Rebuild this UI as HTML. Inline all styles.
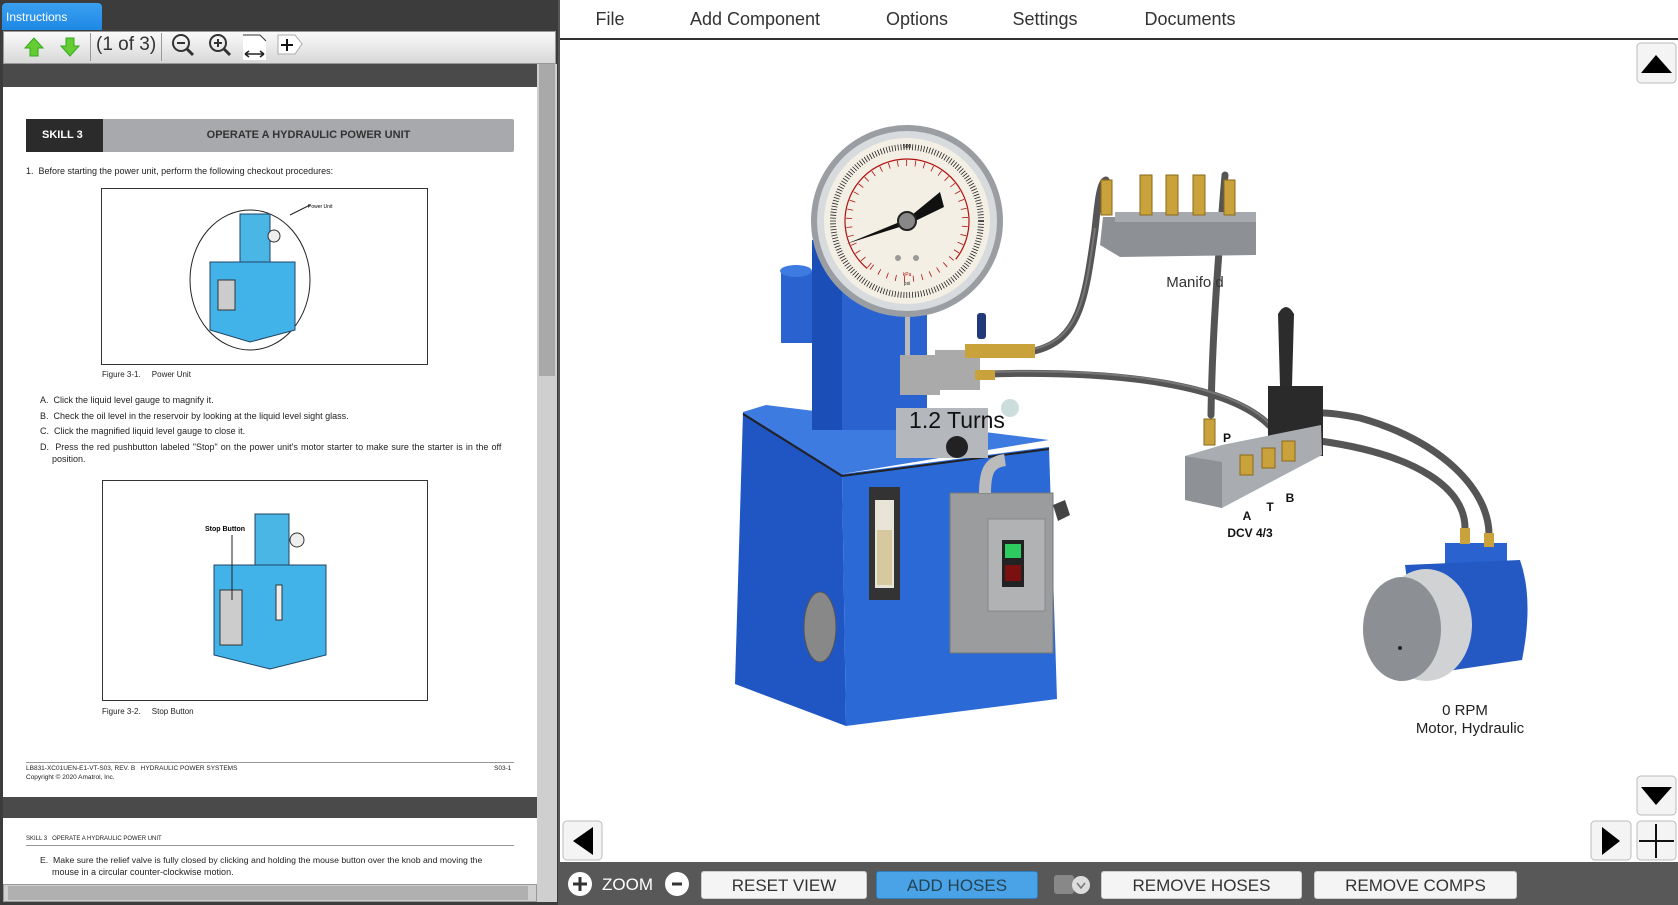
<!DOCTYPE html>
<html><head><meta charset="utf-8"><style>
*{margin:0;padding:0;box-sizing:border-box}
body{width:1678px;height:905px;position:relative;overflow:hidden;background:#fff;font-family:"Liberation Sans",sans-serif}
.a{position:absolute}
.menu span{position:absolute;top:9px;font-size:18px;color:#333;transform:translateX(-50%);white-space:nowrap}
.btn{position:absolute;top:871px;height:28px;background:#f4f4f4;border:1px solid #ccc;border-radius:3px;font-size:17px;color:#333;text-align:center;line-height:27px}
.pt{position:absolute;font-size:9px;color:#222;white-space:nowrap}
</style></head><body>
<div class="a" style="left:0;top:0;width:558px;height:905px;background:#3c3c3c"></div>
<div class="a" style="left:2px;top:3px;width:100px;height:27px;background:linear-gradient(#3aa0f0,#1e88e5);border-radius:4px 4px 0 0;color:#fff;font-size:12px;padding:7px 0 0 4px">Instructions</div>
<div class="a" style="left:3px;top:31px;width:553px;height:33px;background:linear-gradient(#fafafa,#d8d8d8);border:1px solid #999"></div>
<div class="a" style="left:96px;top:34px;font-size:19px;color:#333">(1 of 3)</div>
<div class="a" style="left:90px;top:33px;width:1px;height:28px;background:#999"></div>
<div class="a" style="left:161px;top:33px;width:1px;height:28px;background:#999"></div>
<div class="a" style="left:3px;top:64px;width:534px;height:23px;background:#4a4a4a"></div>
<div class="a" style="left:537px;top:64px;width:20px;height:838px;background:#cfcfcf"></div>
<div class="a" style="left:539px;top:64px;width:16px;height:312px;background:#a9a9a9"></div>
<div class="a" style="left:3px;top:87px;width:534px;height:710px;background:#fff"></div>
<div class="a" style="left:3px;top:797px;width:534px;height:21px;background:#4a4a4a"></div>
<div class="a" style="left:3px;top:818px;width:534px;height:66px;background:#fff"></div>
<div class="a" style="left:3px;top:884px;width:534px;height:18px;background:#cfcfcf;border:1px solid #999"></div>
<div class="a" style="left:8px;top:886px;width:520px;height:14px;background:#b0b0b0"></div>
<div class="a" style="left:26px;top:119px;width:488px;height:33px;background:#a7a9ac;border-radius:2px"></div>
<div class="a" style="left:26px;top:119px;width:77px;height:33px;background:#2b2b2b;color:#fff;font-size:11px;font-weight:bold;line-height:33px;padding-left:16px">SKILL 3</div>
<div class="a" style="left:103px;top:119px;width:411px;height:33px;color:#333;font-size:11px;font-weight:bold;line-height:33px;text-align:center">OPERATE A HYDRAULIC POWER UNIT</div>
<div class="pt" style="left:26px;top:166px">1.&nbsp;&nbsp;Before starting the power unit, perform the following checkout procedures:</div>
<div class="a" style="left:101px;top:188px;width:327px;height:177px;border:1px solid #333"></div>
<div class="pt" style="left:102px;top:370px;font-size:8px">Figure 3-1.&nbsp;&nbsp;&nbsp;&nbsp;&nbsp;Power Unit</div>
<div class="pt" style="left:40px;top:395px">A.&nbsp;&nbsp;Click the liquid level gauge to magnify it.</div>
<div class="pt" style="left:40px;top:411px">B.&nbsp;&nbsp;Check the oil level in the reservoir by looking at the liquid level sight glass.</div>
<div class="pt" style="left:40px;top:426px">C.&nbsp;&nbsp;Click the magnified liquid level gauge to close it.</div>
<div class="pt" style="left:40px;top:442px;word-spacing:0.6px">D.&nbsp;&nbsp;Press the red pushbutton labeled "Stop" on the power unit's motor starter to make sure the starter is in the off</div>
<div class="pt" style="left:52px;top:454px">position.</div>
<div class="a" style="left:102px;top:480px;width:326px;height:221px;border:1px solid #333"></div>
<div class="pt" style="left:102px;top:707px;font-size:8px">Figure 3-2.&nbsp;&nbsp;&nbsp;&nbsp;&nbsp;Stop Button</div>
<div class="a" style="left:26px;top:762px;width:488px;height:1px;background:#999"></div>
<div class="pt" style="left:26px;top:765px;font-size:6.5px">LB831-XC01UEN-E1-VT-S03, REV. B&nbsp;&nbsp;&nbsp;HYDRAULIC POWER SYSTEMS</div>
<div class="pt" style="left:26px;top:774px;font-size:6.5px">Copyright © 2020 Amatrol, Inc.</div>
<div class="pt" style="left:494px;top:765px;font-size:6.5px">S03-1</div>
<div class="pt" style="left:26px;top:836px;font-size:6px">SKILL 3&nbsp;&nbsp;&nbsp;OPERATE A HYDRAULIC POWER UNIT</div>
<div class="a" style="left:26px;top:845px;width:488px;height:1px;background:#999"></div>
<div class="pt" style="left:40px;top:855px;font-size:8.7px">E.&nbsp;&nbsp;Make sure the relief valve is fully closed by clicking and holding the mouse button over the knob and moving the</div>
<div class="pt" style="left:52px;top:867px">mouse in a circular counter-clockwise motion.</div>

<div class="a" style="left:558px;top:0;width:1120px;height:905px;background:#fff;border-left:2px solid #555"></div>
<div class="a menu" style="left:0;top:0"><span style="left:610px">File</span><span style="left:755px">Add Component</span><span style="left:917px">Options</span><span style="left:1045px">Settings</span><span style="left:1190px">Documents</span></div>
<div class="a" style="left:560px;top:38px;width:1118px;height:2px;background:#333"></div>

<div class="a" style="left:560px;top:862px;width:1118px;height:43px;background:#585858"></div>
<div class="a" style="left:602px;top:875px;font-size:17px;color:#fff">ZOOM</div>
<div class="btn" style="left:701px;width:166px">RESET VIEW</div>
<div class="btn" style="left:876px;width:162px;background:#4aa3e6;border-color:#2f7fbf;color:#245">ADD HOSES</div>
<div class="btn" style="left:1101px;width:201px">REMOVE HOSES</div>
<div class="btn" style="left:1314px;width:203px">REMOVE COMPS</div>

<svg class="a" style="left:0;top:0" width="1678" height="905" viewBox="0 0 1678 905">
<path d="M34 38 L25 48 H30 V56 H38 V48 H43 Z" fill="#6c3" stroke="#3a2" />
<path d="M70 56 L61 46 H66 V38 H74 V46 H79 Z" fill="#6c3" stroke="#3a2" />
<circle cx="181" cy="43" r="8" fill="none" stroke="#333" stroke-width="2"/><line x1="187" y1="49" x2="193" y2="55" stroke="#333" stroke-width="3"/><line x1="177" y1="43" x2="185" y2="43" stroke="#333" stroke-width="2"/>
<circle cx="218" cy="43" r="8" fill="none" stroke="#333" stroke-width="2"/><line x1="224" y1="49" x2="230" y2="55" stroke="#333" stroke-width="3"/><line x1="214" y1="43" x2="222" y2="43" stroke="#333" stroke-width="2"/><line x1="218" y1="39" x2="218" y2="47" stroke="#333" stroke-width="2"/>
<path d="M243 35 H260 L266 41 V60 H243 Z" fill="#fff"/><path d="M243 35 H260 L266 41" fill="none" stroke="#333"/><path d="M245 54 H264 M245 54 l4 -3 M245 54 l4 3 M264 54 l-4 -3 M264 54 l-4 3" stroke="#222" stroke-width="1.5" fill="none"/>
<path d="M278 35 H295 L302 44 L295 54 H278 Z" fill="#fff" stroke="#aaa"/><path d="M281 45 H293 M287 39 V51" stroke="#111" stroke-width="2"/>
<ellipse cx="250" cy="280" rx="60" ry="70" fill="#fff" stroke="#222"/>
<path d="M290 215 L310 205" stroke="#222"/><text x="308" y="208" font-size="5" font-family="Liberation Sans">Power Unit</text>
<rect x="240" y="214" width="30" height="50" fill="#4ab6e6" stroke="#246"/>
<path d="M210 262 L295 262 L295 330 L250 342 L210 330 Z" fill="#41b3e8" stroke="#246"/>
<rect x="218" y="280" width="17" height="30" fill="#ccc" stroke="#333"/><circle cx="274" cy="236" r="6" fill="#eee" stroke="#333"/>
<rect x="255" y="514" width="34" height="55" fill="#4ab6e6" stroke="#246"/>
<path d="M214 565 L326 565 L326 655 L270 669 L214 655 Z" fill="#41b3e8" stroke="#246"/>
<rect x="220" y="590" width="22" height="55" fill="#ccc" stroke="#333"/><circle cx="297" cy="540" r="7" fill="#eee" stroke="#333"/>
<rect x="276" y="585" width="6" height="35" fill="#eee" stroke="#333"/>
<line x1="232" y1="535" x2="232" y2="600" stroke="#222"/><text x="205" y="531" font-size="7" font-weight="bold" font-family="Liberation Sans">Stop Button</text>

<g fill="none" stroke="#555" stroke-width="7" stroke-linecap="round">
<path d="M1034 351 C1080 340 1085 300 1095 230 C1098 200 1100 182 1106 180"/>
<path d="M1225 175 C1218 260 1212 340 1211 415"/>
<path d="M988 374 C1120 370 1230 385 1270 426"/>
<path d="M1288 426 C1295 410 1320 410 1360 418 C1440 440 1490 490 1489 536"/>
<path d="M1244 456 C1248 440 1270 438 1320 441 C1420 455 1465 490 1465 528"/>
</g>
<g fill="none" stroke="#777" stroke-width="2">
<path d="M1034 349 C1080 338 1085 298 1095 228"/>
<path d="M988 372 C1120 368 1230 383 1270 424"/>
</g>
<path d="M743 412 L766 405 L1049 440 L842 474 Z" fill="#3d7be0"/>
<path d="M743 412 L842 474 L846 726 L735 684 Z" fill="#1f56c4"/>
<path d="M842 474 L1049 447 L1057 699 L846 726 Z" fill="#2b6ad6"/>
<path d="M743 414 L842 476 L1049 449" fill="none" stroke="#222" stroke-width="2"/>
<rect x="812" y="240" width="115" height="190" fill="#2a63d0"/>
<rect x="812" y="240" width="30" height="190" fill="#1c4eb8"/>
<rect x="781" y="271" width="31" height="72" fill="#2a63d0"/><ellipse cx="796" cy="271" rx="16" ry="6" fill="#3d7be0"/>
<ellipse cx="820" cy="627" rx="16" ry="35" fill="#888" stroke="#555"/>
<rect x="869" y="487" width="31" height="113" fill="#333"/><rect x="875" y="500" width="19" height="88" fill="#e8e4d8"/>
<rect x="877" y="530" width="15" height="55" fill="#d6c9a0"/>
<rect x="950" y="493" width="103" height="160" fill="#9a9c9e"/><rect x="950" y="493" width="103" height="160" fill="none" stroke="#777"/>
<rect x="988" y="519" width="57" height="92" fill="#b0b2b4" stroke="#888"/>
<rect x="1002" y="540" width="22" height="47" fill="#222"/>
<rect x="1005" y="544" width="16" height="14" fill="#2ecc60"/><rect x="1005" y="565" width="16" height="16" fill="#7a1010"/>
<path d="M985 493 C985 470 990 462 1005 460" stroke="#bbb" stroke-width="12" fill="none"/>
<path d="M1053 505 l12 -5 l5 15 l-12 6z" fill="#444"/>
<rect x="896" y="408" width="92" height="50" fill="#b4b8bc"/><rect x="935" y="350" width="45" height="40" fill="#aaa"/>
<circle cx="957" cy="447" r="11" fill="#222"/>
<rect x="905" y="305" width="5" height="50" fill="#bbb"/><rect x="900" y="355" width="40" height="40" fill="#aaa"/>
<rect x="965" y="344" width="70" height="14" fill="#c9a23b"/><rect x="975" y="370" width="20" height="10" fill="#c9a23b"/>
<rect x="977" y="313" width="9" height="26" fill="#233a7a" rx="3"/>
<circle cx="1010" cy="408" r="9" fill="#cdd"/>
<circle cx="907" cy="221" r="96" fill="#9a9ea3"/>
<circle cx="907" cy="221" r="90" fill="#d8dbde"/>
<circle cx="907" cy="221" r="83" fill="#f4efe4"/>
<circle cx="907" cy="221" r="74" fill="none" stroke="#222" stroke-width="6" stroke-dasharray="0.8 2.1"/>
<circle cx="907" cy="221" r="62" fill="none" stroke="#b01010" stroke-width="1.2" stroke-dasharray="290 100" transform="rotate(130 907 221)"/>
<circle cx="907" cy="221" r="58" fill="none" stroke="#b01010" stroke-width="6" stroke-dasharray="0.8 8" transform="rotate(130 907 221)"/>
<path d="M846 244 L907 219 L940 192 L944 207 L909 224 Z" fill="#111"/>
<circle cx="907" cy="221" r="9" fill="#888" stroke="#222" stroke-width="2"/>
<circle cx="898" cy="258" r="3" fill="#999"/><circle cx="916" cy="258" r="3" fill="#999"/>
<text x="907" y="276" font-size="5" fill="#b01010" text-anchor="middle" font-family="Liberation Sans">kPa</text>
<text x="907" y="285" font-size="5" fill="#222" text-anchor="middle" font-family="Liberation Sans">psi</text>
<text x="907" y="148" font-size="5" text-anchor="middle" font-family="Liberation Sans">500</text>
<text x="957" y="428" font-size="23" text-anchor="middle" fill="#111" font-family="Liberation Sans">1.2 Turns</text>
<path d="M1103 217 L1256 217 L1256 255 L1120 257 L1100 245 Z" fill="#8d9196"/>
<rect x="1115" y="212" width="141" height="10" fill="#a6aaae"/>
<g fill="#c9a23b" stroke="#8a6a1a" stroke-width="1">
<rect x="1101" y="180" width="11" height="35"/><rect x="1140" y="175" width="12" height="40"/><rect x="1166" y="175" width="12" height="40"/><rect x="1193" y="175" width="12" height="40"/><rect x="1224" y="180" width="11" height="35"/>
</g>
<text x="1195" y="287" font-size="15" text-anchor="middle" fill="#333" font-family="Liberation Sans">Manifo d</text>
<path d="M1268 386 L1323 386 L1323 456 L1268 456 Z" fill="#2a2a2a"/>
<path d="M1278 314 Q1286 300 1294 314 L1292 386 L1280 386 Z" fill="#2c2c2c"/>
<path d="M1185 456 L1222 445 L1321 425 L1322 455 L1222 508 L1185 500 Z" fill="#a9adb1"/>
<path d="M1185 456 L1222 462 L1222 508 L1185 500 Z" fill="#8e9296"/>
<g fill="#c9a23b" stroke="#8a6a1a"><rect x="1204" y="419" width="11" height="26"/><rect x="1240" y="455" width="13" height="20"/><rect x="1262" y="448" width="13" height="20"/><rect x="1282" y="441" width="13" height="20"/></g>
<g font-size="12" font-weight="bold" fill="#111" font-family="Liberation Sans" text-anchor="middle">
<text x="1227" y="442">P</text><text x="1247" y="520">A</text><text x="1270" y="511">T</text><text x="1290" y="502">B</text><text x="1250" y="537">DCV 4/3</text></g>
<rect x="1445" y="543" width="62" height="22" fill="#2a63d0"/>
<g fill="#c9a23b"><rect x="1460" y="528" width="10" height="16"/><rect x="1484" y="533" width="10" height="14"/></g>
<path d="M1405 565 L1520 560 Q1534 600 1522 660 L1420 675 Z" fill="#2459c4"/>
<ellipse cx="1426" cy="625" rx="46" ry="56" fill="#d0d2d4"/>
<ellipse cx="1402" cy="629" rx="39" ry="52" fill="#8c9094"/>
<circle cx="1400" cy="648" r="2" fill="#222"/>
<g font-size="15" fill="#222" font-family="Liberation Sans" text-anchor="middle"><text x="1465" y="715">0 RPM</text><text x="1470" y="733">Motor, Hydraulic</text></g>
<g fill="#f4f4f4" stroke="#bbb"><rect x="1637" y="43" width="39" height="40" rx="4"/><rect x="1637" y="776" width="39" height="39" rx="4"/><rect x="563" y="821" width="39" height="39" rx="4"/><rect x="1591" y="821" width="40" height="39" rx="4"/><rect x="1637" y="821" width="39" height="39" rx="4"/></g>
<path d="M1641 73 L1656 55 L1672 73 Z" fill="#000"/>
<path d="M1641 787 L1672 787 L1656 805 Z" fill="#000"/>
<path d="M593 827 L573 841 L593 855 Z" fill="#000"/>
<path d="M1602 827 L1620 841 L1602 855 Z" fill="#000"/>
<path d="M1656 824 V858 M1639 841 H1674" stroke="#111" stroke-width="2"/>
<circle cx="580" cy="884" r="12" fill="#fff"/><path d="M573 884 H587 M580 877 V891" stroke="#333" stroke-width="3"/>
<circle cx="677" cy="884" r="12" fill="#fff"/><path d="M672 884 H682" stroke="#333" stroke-width="3"/>
<rect x="1054" y="875" width="20" height="19" rx="3" fill="#888"/><circle cx="1081" cy="885" r="9" fill="#ddd"/><path d="M1077 883 L1081 888 L1085 883" stroke="#777" stroke-width="1.5" fill="none"/>
</svg>
</body></html>
